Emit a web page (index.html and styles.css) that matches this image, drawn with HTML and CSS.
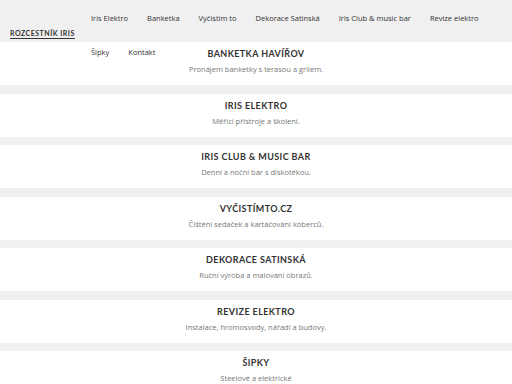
FILE: index.html
```html
<!DOCTYPE html>
<html lang="cs">
<head>
<meta charset="utf-8">
<title>Rozcestník Iris</title>
<link rel="stylesheet" href="styles.css">
</head>
<body>
<header class="header">
  <a class="logo" href="#">ROZCESTNÍK IRIS</a>
  <ul class="nav">
    <li>Iris Elektro</li>
    <li>Banketka</li>
    <li>Vyčistím to</li>
    <li>Dekorace Satinská</li>
    <li>Iris Club &amp; music bar</li>
    <li>Revize elektro</li>
    <li>Šipky</li>
    <li>Kontakt</li>
  </ul>
</header>
<main class="list">
  <section class="card"><h2 class="title">BANKETKA HAVÍŘOV</h2><p class="sub">Pronájem banketky s terasou a grilem.</p></section>
  <section class="card"><h2 class="title">IRIS ELEKTRO</h2><p class="sub">Měřicí přístroje a školení.</p></section>
  <section class="card"><h2 class="title">IRIS CLUB &amp; MUSIC BAR</h2><p class="sub">Denní a noční bar s diskotékou.</p></section>
  <section class="card"><h2 class="title">VYČISTÍMTO.CZ</h2><p class="sub">Čištění sedaček a kartáčování koberců.</p></section>
  <section class="card"><h2 class="title">DEKORACE SATINSKÁ</h2><p class="sub">Ruční výroba a malování obrazů.</p></section>
  <section class="card"><h2 class="title">REVIZE ELEKTRO</h2><p class="sub">Instalace, hromosvody, nářadí a budovy.</p></section>
  <section class="card"><h2 class="title">ŠIPKY</h2><p class="sub">Steelové a elektrické</p></section>
</main>
</body>
</html>
```
FILE: styles.css
```css
html, body {
  margin: 0;
  padding: 0;
  background: #f0f0f0;
  font-family: "Open Sans", "Liberation Sans", sans-serif;
  color: #333;
}
.header {
  position: relative;
  z-index: 1;
  display: flex;
  height: 42px;
  padding-left: 10px;
  background: #f0f0f0;
}
.logo {
  flex: 0 0 81px;
  align-self: flex-end;
  margin-bottom: 4px;
  font-family: "Lato", "Liberation Sans", sans-serif;
  font-weight: 700;
  font-size: 7px;
  line-height: 10px;
  letter-spacing: 0.5px;
  color: #333;
  text-decoration: underline;
  text-underline-offset: 2px;
}
.nav {
  flex: 1;
  display: flex;
  flex-wrap: wrap;
  column-gap: 19px;
  list-style: none;
  margin: 1px 0 0 0;
  padding: 0 10px 0 0;
  align-content: flex-start;
  font-size: 7.5px;
  line-height: 34px;
  color: #333;
}
.list {
  display: block;
}
.card {
  background: #fff;
  height: 43px;
  box-sizing: border-box;
  margin-bottom: 8.5px;
  padding-top: 6px;
  text-align: center;
}
.title {
  margin: 0;
  font-family: "Lato", "Liberation Sans", sans-serif;
  font-weight: 700;
  font-size: 9px;
  line-height: 12px;
  letter-spacing: 0.4px;
  color: #333;
}
.sub {
  margin: 2px 0 0 0;
  font-size: 7.5px;
  line-height: 14px;
  color: #777;
}
```
